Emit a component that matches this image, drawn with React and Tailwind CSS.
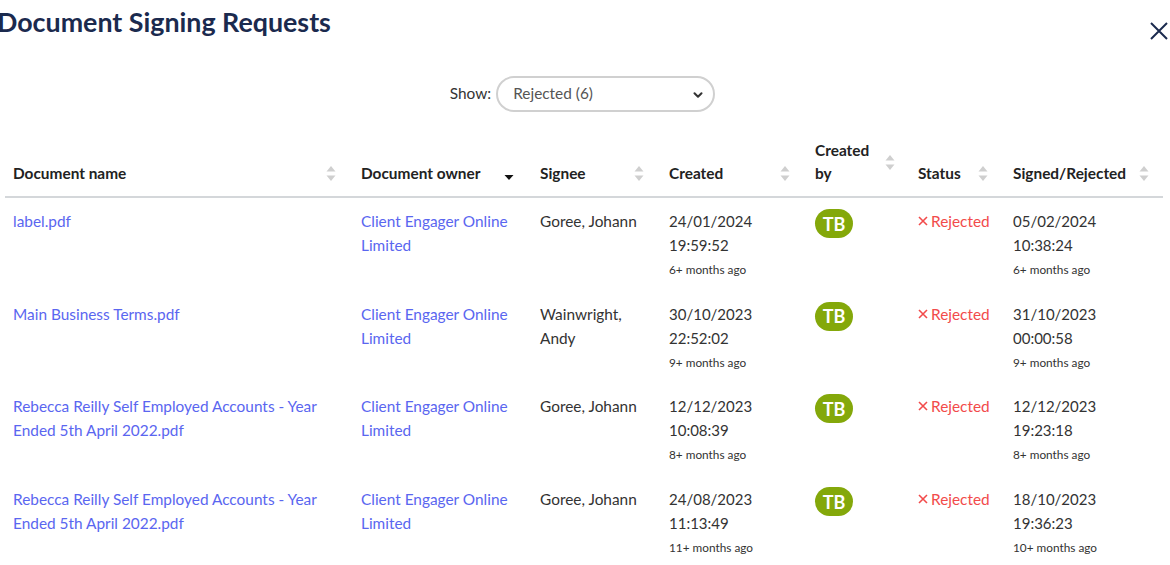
import { ChevronDown } from 'lucide-react';

const rows = [
  {
    name: ['label.pdf'],
    signee: ['Goree, Johann'],
    created: ['24/01/2024', '19:59:52', '6+ months ago'],
    signed: ['05/02/2024', '10:38:24', '6+ months ago'],
  },
  {
    name: ['Main Business Terms.pdf'],
    signee: ['Wainwright,', 'Andy'],
    created: ['30/10/2023', '22:52:02', '9+ months ago'],
    signed: ['31/10/2023', '00:00:58', '9+ months ago'],
  },
  {
    name: ['Rebecca Reilly Self Employed Accounts - Year', 'Ended 5th April 2022.pdf'],
    signee: ['Goree, Johann'],
    created: ['12/12/2023', '10:08:39', '8+ months ago'],
    signed: ['12/12/2023', '19:23:18', '8+ months ago'],
  },
  {
    name: ['Rebecca Reilly Self Employed Accounts - Year', 'Ended 5th April 2022.pdf'],
    signee: ['Goree, Johann'],
    created: ['24/08/2023', '11:13:49', '11+ months ago'],
    signed: ['18/10/2023', '19:36:23', '10+ months ago'],
  },
];

function SortIcon() {
  return (
    <svg width="10" height="17" viewBox="0 0 10 17" className="shrink-0">
      <path d="M5 1 L9.5 6.5 L0.5 6.5 Z" fill="#cfcfcf" />
      <path d="M5 16 L9.5 10.5 L0.5 10.5 Z" fill="#cfcfcf" />
    </svg>
  );
}

function Caret() {
  return (
    <svg width="10" height="17" viewBox="0 0 10 17" className="shrink-0">
      <path d="M0.5 10 L9.5 10 L5 15 Z" fill="#111" />
    </svg>
  );
}

function Th({ children, width, icon = 'sort', iconPad = 'pr-[17px]' }) {
  return (
    <th className={`${width} align-bottom pl-2 pt-[14px] pb-[11px] text-left font-bold text-[15.4px] leading-[23px] text-[#222]`}>
      <div className={`flex items-center justify-between ${iconPad}`}>
        <span>{children}</span>
        {icon === 'sort' ? <SortIcon /> : <Caret />}
      </div>
    </th>
  );
}

function DateCell({ lines }) {
  return (
    <div className="text-[15px]">
      <div>{lines[0]}</div>
      <div>{lines[1]}</div>
      <div className="mt-1 text-[11.8px] leading-[18px]">{lines[2]}</div>
    </div>
  );
}

const cell = 'pl-2 pt-[11px] pb-[11.7px]';

export default function App() {
  return (
    <div className="w-[1170px] h-[565px] overflow-hidden bg-white text-[#333]" style={{ fontFamily: 'Lato, "Open Sans", sans-serif' }}>
      <div className="flex justify-between items-start">
        <h1 className="ml-[-3px] pt-[6px] text-[26.8px] leading-8 font-bold text-[#1b2a4e]">Document Signing Requests</h1>
        <button className="mt-[22px] mr-[2px] text-[#1b2a4e]">
          <svg width="18" height="18" viewBox="0 0 18 18">
            <path d="M1 1 L17 17 M17 1 L1 17" stroke="#1b2a4e" strokeWidth="2" />
          </svg>
        </button>
      </div>

      <div className="mt-[36px] pr-[5px] flex items-center justify-center gap-[5px] text-[15.4px]">
        <span className="text-[#333]">Show:</span>
        <div className="relative w-[219px] h-[36px] rounded-full border-2 border-[#d0d0d0] flex items-center pl-[15px] text-[#555]">
          Rejected (6)
          <ChevronDown size={14} strokeWidth={3.5} className="absolute right-[8px] top-[10px] text-[#333]" />
        </div>
      </div>

      <table className="ml-[5px] mt-[13px] w-[1158px] table-fixed border-collapse text-[15.4px] leading-6">
        <thead>
          <tr className="border-b-2 border-[#d4d7da]">
            <Th width="w-[348px]" iconPad="pr-[17px]">Document name</Th>
            <Th width="w-[179px]" icon="caret" iconPad="pr-[18px]">Document owner</Th>
            <Th width="w-[129px]" iconPad="pr-[17px]">Signee</Th>
            <Th width="w-[146px]" iconPad="pr-[17px]">Created</Th>
            <th className="w-[103px] align-bottom pl-2 pt-[14px] pb-[11px] text-left font-bold text-[15.4px] leading-[23px] text-[#222]">
              <div className="flex items-center gap-[16px]">
                <span>Created<br />by</span>
                <SortIcon />
              </div>
            </th>
            <Th width="w-[95px]" iconPad="pr-[17px]">Status</Th>
            <Th width="w-[158px]" iconPad="pr-[14px]">Signed/Rejected</Th>
          </tr>
        </thead>
        <tbody>
          {rows.map((r, i) => (
            <tr key={i} className="align-top">
              <td className={`${cell} text-[#5a66f0]`}>
                {r.name.map((l, j) => <div key={j}>{l}</div>)}
              </td>
              <td className={`${cell} text-[#5a66f0]`}>
                <div>Client Engager Online</div>
                <div>Limited</div>
              </td>
              <td className={`${cell} text-[#333]`}>
                {r.signee.map((l, j) => <div key={j}>{l}</div>)}
              </td>
              <td className={`${cell} text-[#333]`}>
                <DateCell lines={r.created} />
              </td>
              <td className={cell}>
                <div className="flex items-center justify-center w-[38px] h-[29px] rounded-full bg-[#84a80a] text-white font-bold text-[18px]">TB</div>
              </td>
              <td className={`${cell} text-[#f24b4b]`}>
                <span className="flex items-center gap-[3px]">
                  <svg width="10" height="10" viewBox="0 0 10 10" className="shrink-0">
                    <path d="M1 1 L9 9 M9 1 L1 9" stroke="#f24b4b" strokeWidth="1.6" />
                  </svg>
                  Rejected
                </span>
              </td>
              <td className={`${cell} text-[#333]`}>
                <DateCell lines={r.signed} />
              </td>
            </tr>
          ))}
        </tbody>
      </table>
    </div>
  );
}
